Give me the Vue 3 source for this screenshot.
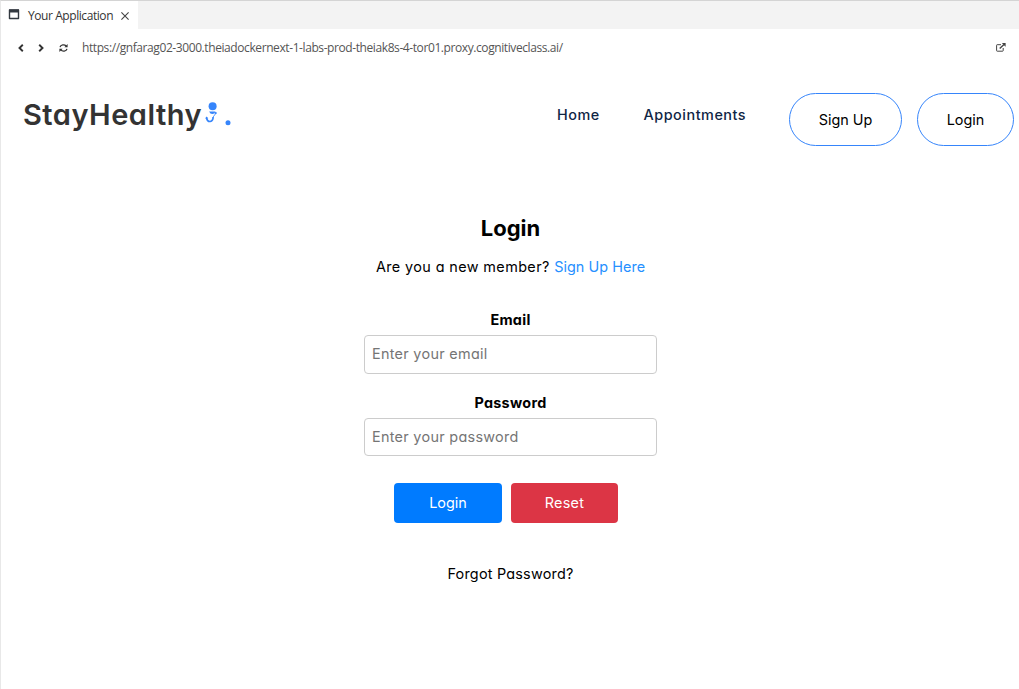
<script setup>
import { ref } from 'vue'

const email = ref('')
const password = ref('')

function reset() {
  email.value = ''
  password.value = ''
}
</script>

<template>
  <div class="window">
    <div class="tabs">
      <div class="tab">
        <svg class="tab-icon" width="12" height="11" viewBox="0 0 12 11"><path d="M1.5 1h9v8.5h-9z" fill="#fff" stroke="#333940" stroke-width="1.4" stroke-linejoin="round" /><path d="M1 .5h10v3H1z" fill="#333940" /></svg>
        <span class="tab-title">Your Application</span>
        <svg width="8" height="8" viewBox="0 0 8 8"><path d="M.4.4l7.2 7.2M7.6.4L.4 7.6" stroke="#444" stroke-width="1.1" /></svg>
      </div>
    </div>

    <div class="toolbar">
      <svg class="back" width="6" height="8" viewBox="0 0 6 8"><path d="M4.8.8L1.5 4l3.3 3.2" fill="none" stroke="#333" stroke-width="1.9" /></svg>
      <svg class="forward" width="6" height="8" viewBox="0 0 6 8"><path d="M1.2.8L4.5 4 1.2 7.2" fill="none" stroke="#333" stroke-width="1.9" /></svg>
      <svg class="refresh" width="9" height="8" viewBox="0 0 9 8"><path d="M1 3.2C1.7.6 5.5.1 7.2 2.1M8 4.8C7.3 7.4 3.5 7.9 1.8 5.9" fill="none" stroke="#333" stroke-width="1.3" /><path d="M8.6 0v3.2H5.4zM.4 8V4.8h3.2z" fill="#333" /></svg>
      <span class="url">https://gnfarag02-3000.theiadockernext-1-labs-prod-theiak8s-4-tor01.proxy.cognitiveclass.ai/</span>
      <svg class="external" width="10" height="9" viewBox="0 0 10 9"><path d="M5 1.7H1.2Q.6 1.7.6 2.3V7.6Q.6 8.2 1.2 8.2H6.6Q7.2 8.2 7.2 7.6V5" fill="none" stroke="#444" stroke-width="1" /><path d="M3.7 5.4L8 1.5" stroke="#444" stroke-width="1.4" /><path d="M5.8 0H9.6V3.8z" fill="#444" /></svg>
    </div>

    <header class="nav">
      <div class="brand">
        <span class="brand-name">StayHealthy</span>
        <svg class="brand-mark" width="28" height="26" viewBox="0 0 28 26" fill="#3685fb">
          <circle cx="8.6" cy="5.2" r="4" />
          <path d="M5.1 10.4h6.4q-.8 2.6-3.1 2.6t-3.3-2.6z" />
          <circle cx="11.7" cy="12.1" r="1.1" />
          <path d="M2.6 16.8q.6 4 3.6 3.7 3-.6 2.9-4.4" fill="none" stroke="#3685fb" stroke-width="1.7" />
          <path d="M8.9 16.4l2.4-3.4" stroke="#3685fb" stroke-width=".8" />
          <path d="M1.1 17.5l1.4-1.9 1.8 1.7z" />
          <circle cx="24" cy="21.7" r="2.5" />
        </svg>
      </div>
      <nav class="links">
        <a class="home">Home</a>
        <a class="appointments">Appointments</a>
      </nav>
      <button class="pill signup">Sign Up</button>
      <button class="pill login">Login</button>
    </header>

    <main class="panel">
      <h2>Login</h2>
      <p class="member">Are you a new member? <a>Sign Up Here</a></p>
      <form @submit.prevent>
        <label for="email">Email</label>
        <input id="email" v-model="email" type="email" placeholder="Enter your email">
        <label for="password" class="password-label">Password</label>
        <input id="password" v-model="password" class="password" type="password" placeholder="Enter your password">
        <div class="actions">
          <button class="submit" type="submit">Login</button>
          <button class="reset" type="button" @click="reset">Reset</button>
        </div>
      </form>
      <a class="forgot">Forgot Password?</a>
    </main>
  </div>
</template>

<style>
body { margin: 0; background: #fff; }
</style>

<style scoped>
.window {
  box-sizing: border-box;
  width: 1019px;
  height: 689px;
  overflow: hidden;
  border-top: 1px solid #d4d4d4;
  border-left: 1px solid #e8e8e8;
  background: #fff;
  color: #000;
  font: 14.4px/22px Inter, "Open Sans", sans-serif;
  font-feature-settings: "cv11", "ss03";
}
.window * { box-sizing: border-box; }
svg { display: block; flex: none; }
.tabs { height: 28px; background: #f3f3f3; }
.tab {
  display: flex;
  align-items: center;
  width: 137px;
  height: 28px;
  padding: 1px 0 0 7px;
  background: #fff;
  color: #333;
  font: 12px/18px "Open Sans", sans-serif;
}
.tab-icon { margin: -3px 8px 0 0; }
.tab-title { width: 93px; white-space: nowrap; letter-spacing: -.43px; }
.toolbar {
  display: flex;
  align-items: center;
  height: 37px;
  padding-left: 17px;
}
.forward { margin-left: 14px; }
.refresh { margin-left: 15px; }
.url {
  width: 484px;
  margin-left: 14px;
  color: #555;
  font: 12px/18px "Open Sans", sans-serif;
  letter-spacing: -.41px;
  white-space: nowrap;
}
.external { margin-left: 430px; }
.nav { display: flex; height: 80px; padding: 26px 0 0 22px; }
.brand { display: flex; width: 534px; }
.brand-name {
  width: 181px;
  color: #333;
  font-size: 29px;
  font-weight: 600;
  line-height: 46px;
  letter-spacing: .5px;
}
.brand-mark { margin-top: 9px; }
.links { display: flex; width: 232px; color: #0f2545; font-weight: 500; line-height: 46px; letter-spacing: .53px; }
.home { width: 86.5px; }
.pill {
  height: 53px;
  padding: 0;
  border: 1px solid #3685fb;
  border-radius: 27px;
  background: #fff;
  color: #000;
  font: inherit;
}
.signup { width: 113px; }
.login { width: 97px; margin-left: 15px; }
.nav .pill { margin-top: 1px; flex: none; }
.panel { width: 293px; margin: 67px 0 0 363px; text-align: center; }
h2 { margin: 0; font-size: 22px; font-weight: 700; line-height: 30px; }
.member { margin: 13px -20px 0; white-space: nowrap; letter-spacing: .4px; }
.member a { color: #2690ff; letter-spacing: .05px; }
form { margin-top: 31px; }
label { display: block; font-weight: 700; line-height: 22px; letter-spacing: .3px; }
input {
  display: block;
  width: 293px;
  height: 39px;
  margin-top: 4px;
  padding: 0 7px 2px;
  border: 1px solid #ccc;
  border-radius: 4px;
  background: #fff;
  font: inherit;
  font-feature-settings: inherit;
  letter-spacing: .3px;
}
input::placeholder { color: #757575; opacity: 1; }
.password-label { margin-top: 18px; }
.password { height: 38px; }
.actions { display: flex; gap: 9px; margin: 27px 0 0 30px; }
.actions button {
  height: 40px;
  padding: 0;
  border: 0;
  border-radius: 4px;
  color: #fff;
  font: inherit;
}
.submit { width: 108px; background: #007bff; }
.actions .reset { width: 107px; background: #dc3545; letter-spacing: .3px; }
.forgot { display: block; margin-top: 40px; letter-spacing: .22px; }
</style>
